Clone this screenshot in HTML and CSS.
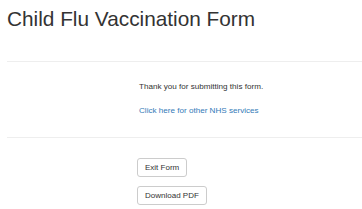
FILE: index.html
```html
<!DOCTYPE html>
<html lang="en">
<head>
    <meta charset="UTF-8">
    <title>Child Flu Vaccination Form</title>
    <link rel="stylesheet" href="styles.css">
</head>
<body>
    <div class="page">
        <h1>Child Flu Vaccination Form</h1>
        <hr>
        <div class="message">
            <p class="thanks">Thank you for submitting this form.</p>
            <p class="more"><a href="#">Click here for other NHS services</a></p>
        </div>
        <hr>
        <div class="actions">
            <button class="btn" id="exit">Exit Form</button>
            <button class="btn" id="pdf">Download PDF</button>
        </div>
    </div>
</body>
</html>
```

FILE: styles.css
```css
body {
    margin: 0;
    font-family: "Liberation Sans", Arial, sans-serif;
    color: #333;
    background: #fff;
}
.page {
    padding-left: 7px;
}
h1 {
    margin: 8px 0 0;
    font-size: 20.8px;
    font-weight: normal;
    line-height: 1.1;
    height: 53px;
}
hr {
    margin: 0;
    border: 0;
    border-top: 1px solid #eee;
}
.message {
    padding-left: 132px;
    font-size: 8.1px;
    line-height: 12px;
}
.message p {
    margin: 0;
}
.thanks {
    padding-top: 19px;
}
.more {
    padding-top: 11.5px;
    padding-bottom: 20px;
}
.more a {
    color: #337ab7;
    text-decoration: none;
}
.actions {
    padding: 20px 0 0 130px;
    display: flex;
    flex-direction: column;
    align-items: flex-start;
    row-gap: 9px;
}
.btn {
    font-family: "Liberation Sans", Arial, sans-serif;
    font-size: 8px;
    line-height: 9px;
    padding: 4px 7px;
    color: #333;
    background: #fff;
    border: 1px solid #ccc;
    border-radius: 3px;
}
```
